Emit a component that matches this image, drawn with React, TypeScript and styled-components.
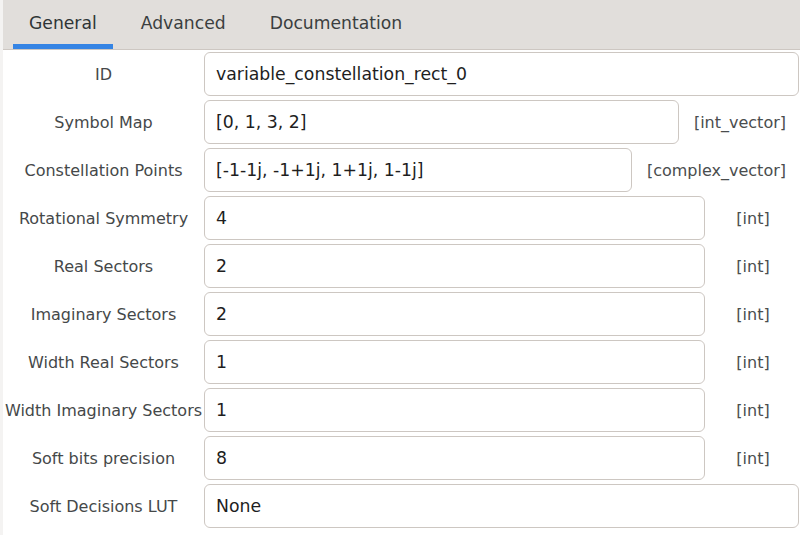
import React from 'react';
import styled, { createGlobalStyle } from 'styled-components';

const GlobalStyle = createGlobalStyle`
  html, body {
    margin: 0;
    padding: 0;
    background: #ffffff;
  }
  body {
    font-family: "DejaVu Sans", "Liberation Sans", sans-serif;
    font-size: 16px;
  }
`;

const Window = styled.div`
  width: 800px;
  height: 535px;
  overflow: hidden;
  background: #ffffff;
  border-left: 3px solid #f4f3f2;
  box-sizing: border-box;
  display: flex;
  flex-direction: column;
`;

const TabBar = styled.div`
  height: 50px;
  flex: none;
  background: #e1dedb;
  border-bottom: 1px solid #cdc7c2;
  display: flex;
  gap: 12px;
  padding-left: 10px;
  box-sizing: border-box;
`;

const Tab = styled.div<{ $active?: boolean }>`
  padding: 0 16px 4px;
  display: flex;
  align-items: center;
  height: 49px;
  box-sizing: border-box;
  color: ${p => (p.$active ? '#2e3436' : '#3b3e40')};
  font-size: 17.2px;
  white-space: nowrap;
  box-shadow: ${p => (p.$active ? 'inset 0 -5px 0 #3584e4' : 'none')};
`;

const Form = styled.div`
  display: flex;
  flex-direction: column;
  gap: 4px;
  padding-top: 2px;
`;

const Row = styled.div`
  display: flex;
  align-items: center;
  height: 44px;
`;

const Label = styled.div`
  width: 201px;
  flex: none;
  text-align: center;
  color: #454849;
  font-size: 16px;
  white-space: nowrap;
`;

const Entry = styled.div`
  flex: 1;
  height: 44px;
  box-sizing: border-box;
  border: 1px solid #cdc7c2;
  border-radius: 6px;
  background: #ffffff;
  display: flex;
  align-items: center;
  padding: 0 11px;
  color: #1e1e1e;
  font-size: 17.3px;
  white-space: nowrap;
  margin-right: 1px;
`;

const TypeLabel = styled.div`
  flex: none;
  min-width: 94px;
  padding: 0 14px;
  box-sizing: border-box;
  text-align: center;
  color: #4a4d4e;
  font-size: 16px;
  white-space: nowrap;
`;

type Param = { label: string; value: string; type?: string };

const params: Param[] = [
  { label: 'ID', value: 'variable_constellation_rect_0' },
  { label: 'Symbol Map', value: '[0, 1, 3, 2]', type: '[int_vector]' },
  { label: 'Constellation Points', value: '[-1-1j, -1+1j, 1+1j, 1-1j]', type: '[complex_vector]' },
  { label: 'Rotational Symmetry', value: '4', type: '[int]' },
  { label: 'Real Sectors', value: '2', type: '[int]' },
  { label: 'Imaginary Sectors', value: '2', type: '[int]' },
  { label: 'Width Real Sectors', value: '1', type: '[int]' },
  { label: 'Width Imaginary Sectors', value: '1', type: '[int]' },
  { label: 'Soft bits precision', value: '8', type: '[int]' },
  { label: 'Soft Decisions LUT', value: 'None' },
];

export default function App() {
  return (
    <>
      <GlobalStyle />
      <Window>
        <TabBar>
          <Tab $active>General</Tab>
          <Tab>Advanced</Tab>
          <Tab>Documentation</Tab>
        </TabBar>
        <Form>
          {params.map(p => (
            <Row key={p.label}>
              <Label>{p.label}</Label>
              <Entry>{p.value}</Entry>
              {p.type && <TypeLabel>{p.type}</TypeLabel>}
            </Row>
          ))}
        </Form>
      </Window>
    </>
  );
}
